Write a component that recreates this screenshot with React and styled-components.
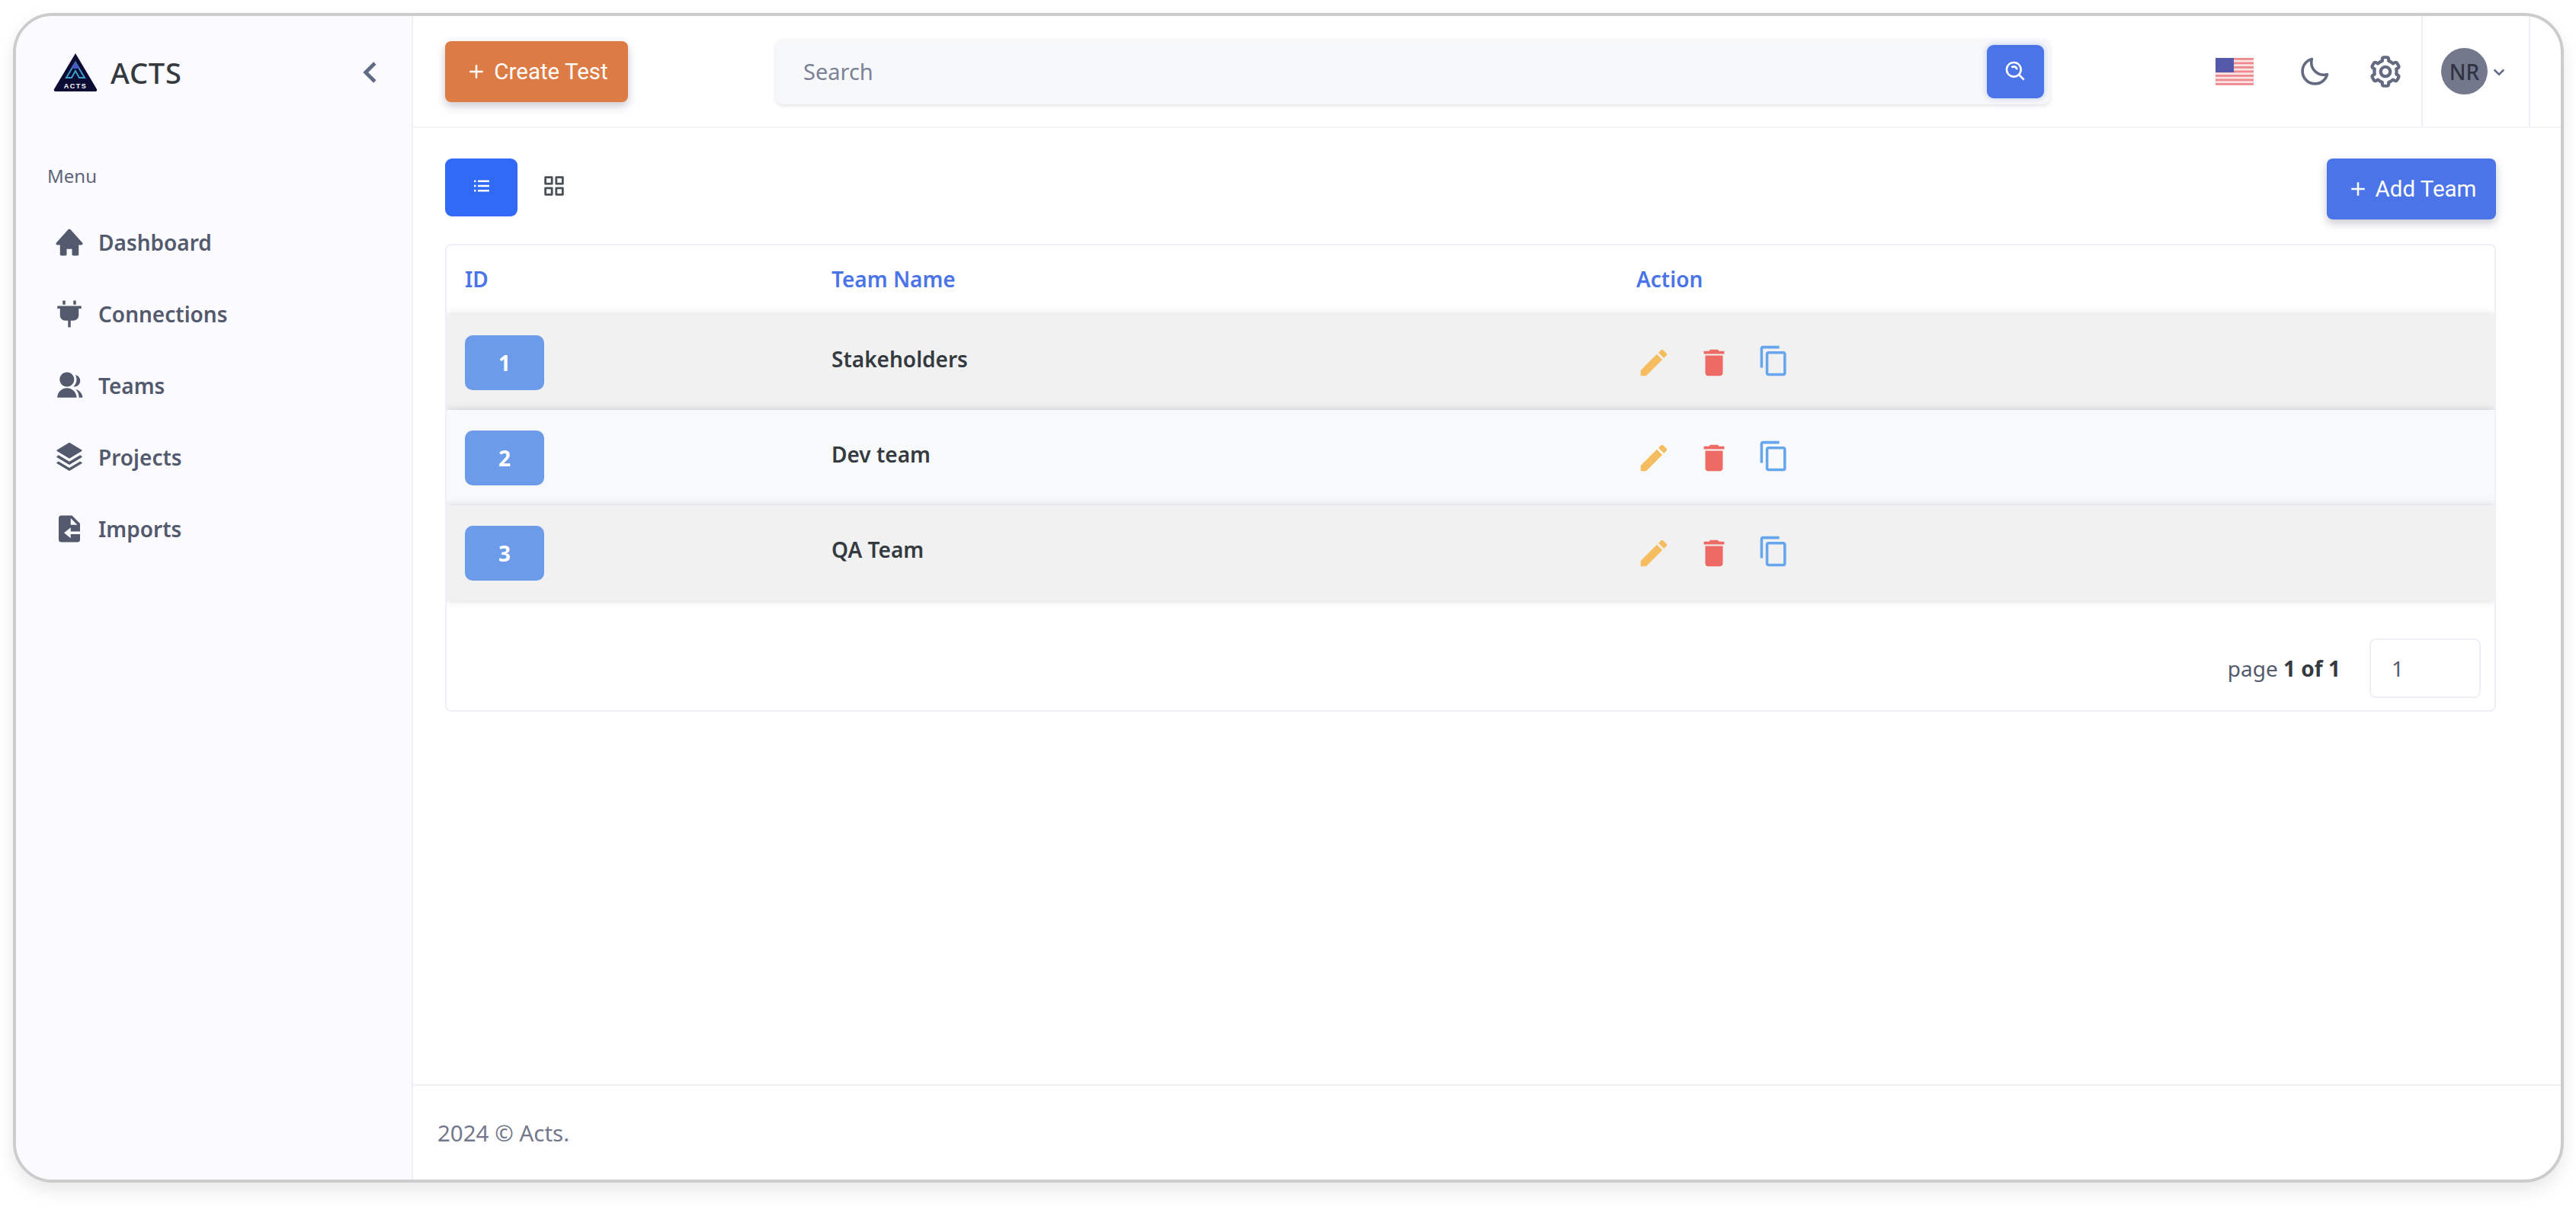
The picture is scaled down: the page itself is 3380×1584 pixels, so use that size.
import React from "react";
import styled, { createGlobalStyle } from "styled-components";
import {
  BiChevronLeft,
  BiChevronDown,
  BiCog,
  BiGridAlt,
  BiListUl,
  BiMoon,
  BiSearchAlt,
  BiSolidFileImport,
  BiSolidHome,
  BiSolidPlug,
} from "react-icons/bi";
import { MdAdd, MdContentCopy, MdDelete, MdEdit } from "react-icons/md";
import { RiGroupFill, RiStackFill } from "react-icons/ri";

const FONT = `"Noto Sans", "Open Sans", sans-serif`;

const GlobalStyle = createGlobalStyle`
  html, body { margin: 0; padding: 0; background: #fff; }
  * { box-sizing: border-box; }
  body { font-family: ${FONT}; color: #495057; }
`;

const menu = [
  { label: "Dashboard", Icon: BiSolidHome, size: 42 },
  { label: "Connections", Icon: BiSolidPlug, size: 42 },
  { label: "Teams", Icon: RiGroupFill, size: 38 },
  { label: "Projects", Icon: RiStackFill, size: 42 },
  { label: "Imports", Icon: BiSolidFileImport, size: 42 },
];

const teams = [
  { id: 1, name: "Stakeholders" },
  { id: 2, name: "Dev team" },
  { id: 3, name: "QA Team" },
];

const Logo = () => (
  <svg width="58" height="52" viewBox="0 0 58 52">
    <path d="M29 1 L57 48 Q58 51 55 51 H3 Q0 51 1 48 Z" fill="#0b0b33" />
    <path d="M29 13 L17 33 H24 L29 24 L34 33 H41 Z" fill="none" stroke="#3b9dc9" strokeWidth="2" />
    <path d="M29 12 L24 21 L34 21 Z" fill="#4b55c4" />
    <text x="29" y="47" textAnchor="middle" fontSize="9" fontWeight="700" letterSpacing="1.5" fill="#fff" fontFamily="Liberation Sans">
      ACTS
    </text>
  </svg>
);

const Flag = () => (
  <svg width="50" height="36" viewBox="0 0 50 36">
    <rect width="50" height="36" fill="#fbe4e4" />
    {[0, 1, 2, 3, 4, 5, 6].map((i) => (
      <rect key={i} y={i * 5.5} width="50" height="2.8" fill="#ee8a8f" />
    ))}
    <rect width="24" height="19" fill="#5358a8" />
  </svg>
);

const Page = styled.div`
  width: 3380px;
  height: 1584px;
  padding: 17px 16px 32px 17px;
`;
const Frame = styled.div`
  height: 100%;
  display: flex;
  border: 4px solid #cccccc;
  border-radius: 52px;
  overflow: hidden;
  background: #fff;
  box-shadow: 0 10px 22px rgba(0, 0, 0, 0.09);
`;
const Sidebar = styled.aside`
  width: 521px;
  flex: none;
  background: #fbfbff;
  border-right: 2px solid #eff0f5;
`;
const Brand = styled.div`
  height: 147px;
  display: flex;
  align-items: center;
  padding: 0 42px 0 49px;
  gap: 17px;
`;
const BrandName = styled.span`
  font-size: 38px;
  font-weight: 500;
  letter-spacing: 0.8px;
  color: #343a40;
  flex: 1;
`;
const Collapse = styled(BiChevronLeft)`
  font-size: 58px;
  color: #5f6b85;
  margin-right: -18px;
`;
const MenuTitle = styled.div`
  margin: 47px 0 0 41px;
  font-size: 24px;
  line-height: 32px;
  color: #5f6478;
`;
const Nav = styled.nav`
  margin-top: 24px;
  display: flex;
  flex-direction: column;
`;
const NavItem = styled.a`
  height: 94px;
  display: flex;
  align-items: center;
  padding-left: 49px;
  gap: 17px;
  font-size: 28px;
  font-weight: 600;
  color: #545a6d;
  svg {
    font-size: ${(p) => p.$iconSize}px;
    margin: 0 ${(p) => (42 - p.$iconSize) / 2}px;
    flex: none;
  }
`;
const Main = styled.div`
  flex: 1;
  display: flex;
  flex-direction: column;
  min-width: 0;
`;
const Header = styled.header`
  height: 147px;
  flex: none;
  display: flex;
  align-items: center;
  padding-left: 42px;
  border-bottom: 2px solid #f4f5f8;
`;
const Button = styled.button`
  height: 80px;
  display: inline-flex;
  align-items: center;
  justify-content: center;
  gap: 8px;
  border: 0;
  border-radius: 8px;
  padding: 0;
  width: ${(p) => p.$width}px;
  background: ${(p) => p.$color};
  color: #fff;
  font-family: Roboto, sans-serif;
  font-size: 29.5px;
  box-shadow: 0 5px 12px rgba(60, 60, 90, 0.28);
  svg {
    font-size: 30px;
  }
`;
const SearchBox = styled.div`
  width: 1672px;
  height: 86px;
  margin-left: 194px;
  display: flex;
  align-items: center;
  justify-content: space-between;
  padding: 0 8px 0 36px;
  background: #f7f8fa;
  border-radius: 10px;
  box-shadow: 0 2px 5px rgba(60, 60, 90, 0.14);
  font-size: 29px;
  color: #7b8296;
`;
const SearchButton = styled.button`
  width: 75px;
  height: 70px;
  border: 0;
  padding: 0;
  border-radius: 9px;
  background: #4a74e7;
  color: #fff;
  font-size: 32px;
  display: flex;
  align-items: center;
  justify-content: center;
  box-shadow: 0 0 8px rgba(74, 116, 231, 0.35);
`;
const HeaderTools = styled.div`
  margin-left: auto;
  height: 100%;
  display: flex;
  align-items: center;
  padding-right: 40px;
`;
const ToolIcon = styled.span`
  display: flex;
  color: #646b80;
  font-size: ${(p) => p.$size}px;
  margin-left: ${(p) => p.$gap}px;
`;
const UserBox = styled.div`
  height: 100%;
  width: 143px;
  margin-left: 22px;
  display: flex;
  align-items: center;
  padding-left: 24px;
  border-left: 2px solid #eff0f5;
  border-right: 2px solid #eff0f5;
  color: #5f6b85;
  font-size: 30px;
`;
const Avatar = styled.div`
  width: 61px;
  height: 61px;
  border-radius: 50%;
  background: #74788d;
  color: #2f3340;
  font-size: 28px;
  font-weight: 500;
  display: flex;
  align-items: center;
  justify-content: center;
`;
const Content = styled.main`
  flex: 1;
  padding: 40px 85px 0 42px;
`;
const Toolbar = styled.div`
  display: flex;
  align-items: flex-start;
  margin-bottom: 32px;
  height: 80px;
`;
const ViewButton = styled.button`
  width: 95px;
  height: 76px;
  border: 0;
  padding: 0 0 4px;
  border-radius: 9px;
  background: ${(p) => (p.$active ? "#316af7" : "transparent")};
  color: ${(p) => (p.$active ? "#fff" : "#495057")};
  font-size: ${(p) => p.$size}px;
  display: flex;
  align-items: center;
  justify-content: center;
`;
const Spacer = styled.div`
  flex: 1;
`;
const Table = styled.section`
  border: 2px solid #eff0f5;
  border-radius: 8px;
  height: 614px;
  overflow: hidden;
`;
const Row = styled.div`
  display: grid;
  grid-template-columns: 481px 1056px 1fr;
  align-items: center;
  padding-left: 24px;
`;
const HeadRow = styled(Row)`
  height: 91px;
  padding-bottom: 4px;
  color: #4a74e7;
  font-size: 28px;
  font-weight: 600;
`;
const BodyRow = styled(Row)`
  height: 125px;
  background: ${(p) => (p.$odd ? "#f1f1f1" : "#f8f9fa")};
  box-shadow: 0 0 10px rgba(0, 0, 0, 0.16);
`;
const IdBadge = styled.span`
  width: 104px;
  height: 72px;
  border-radius: 10px;
  background: #6c9ce9;
  color: #fff;
  font-size: 28px;
  font-weight: 700;
  display: flex;
  align-items: center;
  justify-content: center;
`;
const TeamName = styled.span`
  font-size: 28px;
  font-weight: 600;
  color: #343a40;
  margin-bottom: 10px;
`;
const Actions = styled.div`
  display: flex;
  align-items: center;
`;
const ActionIcon = styled.span`
  display: flex;
  color: ${(p) => p.$color};
  font-size: ${(p) => p.$size}px;
  width: ${(p) => p.$width}px;
  margin-top: ${(p) => p.$top || 0}px;
`;
const Pager = styled.div`
  display: flex;
  align-items: center;
  justify-content: flex-end;
  padding: 50px 18px 0 0;
  font-size: 28px;
  color: #545a6d;
  gap: 38px;
  b {
    color: #343a40;
    font-weight: 700;
  }
`;
const PageInput = styled.div`
  width: 146px;
  height: 78px;
  border: 2px solid #eff0f5;
  border-radius: 8px;
  display: flex;
  align-items: center;
  padding-left: 27px;
  font-size: 28px;
  color: #545a6d;
`;
const Footer = styled.footer`
  height: 125px;
  flex: none;
  display: flex;
  align-items: center;
  padding-left: 32px;
  border-top: 2px solid #f0f1f5;
  font-size: 29.5px;
  color: #74788d;
`;

export default function App() {
  return (
    <>
      <GlobalStyle />
      <Page>
        <Frame>
          <Sidebar>
            <Brand>
              <Logo />
              <BrandName>ACTS</BrandName>
              <Collapse />
            </Brand>
            <MenuTitle>Menu</MenuTitle>
            <Nav>
              {menu.map(({ label, Icon, size }) => (
                <NavItem key={label} $iconSize={size}>
                  <Icon />
                  {label}
                </NavItem>
              ))}
            </Nav>
          </Sidebar>
          <Main>
            <Header>
              <Button $width={240} $color="#dd7b44">
                <MdAdd />
                Create Test
              </Button>
              <SearchBox>
                Search
                <SearchButton>
                  <BiSearchAlt />
                </SearchButton>
              </SearchBox>
              <HeaderTools>
                <ToolIcon $size={36}>
                  <Flag />
                </ToolIcon>
                <ToolIcon $size={44} $gap={58}>
                  <BiMoon />
                </ToolIcon>
                <ToolIcon $size={50} $gap={46}>
                  <BiCog />
                </ToolIcon>
                <UserBox>
                  <Avatar>NR</Avatar>
                  <BiChevronDown />
                </UserBox>
              </HeaderTools>
            </Header>
            <Content>
              <Toolbar>
                <ViewButton $active $size={30}>
                  <BiListUl />
                </ViewButton>
                <ViewButton $size={34}>
                  <BiGridAlt />
                </ViewButton>
                <Spacer />
                <Button $width={222} $color="#4a74e7">
                  <MdAdd />
                  Add Team
                </Button>
              </Toolbar>
              <Table>
                <HeadRow>
                  <span>ID</span>
                  <span>Team Name</span>
                  <span>Action</span>
                </HeadRow>
                {teams.map((t) => (
                  <BodyRow key={t.id} $odd={t.id % 2 === 1}>
                    <IdBadge>{t.id}</IdBadge>
                    <TeamName>{t.name}</TeamName>
                    <Actions>
                      <ActionIcon $color="#f6bd60" $size={46} $width={79}>
                        <MdEdit />
                      </ActionIcon>
                      <ActionIcon $color="#ee6b65" $size={46} $width={80}>
                        <MdDelete />
                      </ActionIcon>
                      <ActionIcon $color="#66a6ee" $size={43} $width={43} $top={-4}>
                        <MdContentCopy />
                      </ActionIcon>
                    </Actions>
                  </BodyRow>
                ))}
                <Pager>
                  <span>
                    page <b>1 of 1</b>
                  </span>
                  <PageInput>1</PageInput>
                </Pager>
              </Table>
            </Content>
            <Footer>2024 © Acts.</Footer>
          </Main>
        </Frame>
      </Page>
    </>
  );
}
